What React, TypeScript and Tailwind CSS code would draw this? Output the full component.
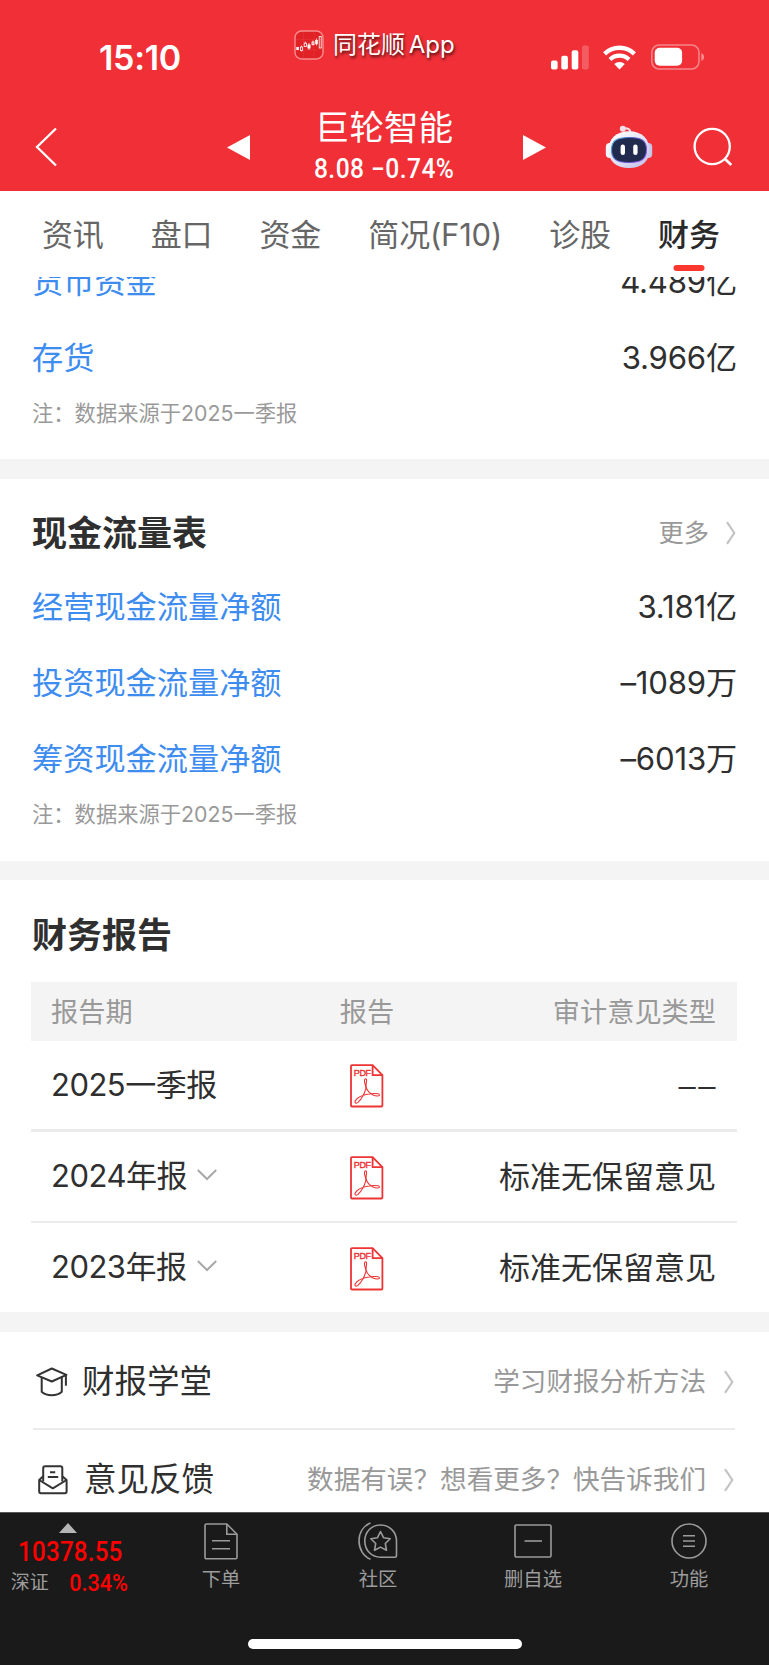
// App.tsx
import type { ReactNode } from "react";

interface RowItem {
  label: string;
  value: string;
}

interface ReportItem {
  period:     string;
  opinion:    string;
  expandable: boolean;
}

const TABS = ["资讯", "盘口", "资金", "简况(F10)", "诊股", "财务"];
const ACTIVE_TAB = "财务";

const BALANCE: RowItem[] = [
  { label: "货币资金", value: "4.489亿" },
  { label: "存货",     value: "3.966亿" },
];

const CASH_FLOW: RowItem[] = [
  { label: "经营现金流量净额", value: "3.181亿" },
  { label: "投资现金流量净额", value: "–1089万" },
  { label: "筹资现金流量净额", value: "–6013万" },
];

const REPORTS: ReportItem[] = [
  { period: "2025一季报", opinion: "",               expandable: false },
  { period: "2024年报",   opinion: "标准无保留意见", expandable: true },
  { period: "2023年报",   opinion: "标准无保留意见", expandable: true },
];

/* ---------- icons ---------- */

function AppBadge() {
  return (
    <svg width="30" height="30" viewBox="0 0 30 30" fill="none">
      <rect x="1" y="1" width="28" height="28" rx="6.5" fill="#e02226" stroke="#f78d8f" strokeWidth="1.4" />
      <path d="M9.5 2v26M20 2v26M2 9.5h26M2 20h26" stroke="#e8393c" strokeWidth=".5" />
      <rect x="2.3" y="17" width="2.6" height="3" fill="#fff" />
      <rect x="6.5" y="17" width="2" height="3.4" stroke="#fff" strokeWidth=".8" />
      <path d="M7.5 15.5V17M7.5 20.4v1.2M11.300 11.5v1.8M15 13v7M19 10.5v5M22.5 8.5v7" stroke="#fff" strokeWidth=".7" />
      <rect x="10.2" y="13.2" width="2.2" height="3.2" stroke="#fff" strokeWidth=".8" />
      <rect x="13.5" y="14.5" width="3" height="4" fill="#fff" />
      <rect x="18" y="12" width="2" height="2.6" stroke="#fff" strokeWidth=".8" />
      <rect x="21.2" y="10" width="2.6" height="4.2" fill="#fff" />
      <rect x="25.2" y="6.5" width="2" height="11.5" stroke="#fff" strokeWidth=".8" />
    </svg>
  );
}

function SignalIcon() {
  return (
    <svg width="38" height="25" viewBox="0 0 38 25" fill="#fff">
      <rect x="0" y="15.5" width="6.6" height="9" rx="2" />
      <rect x="10.3" y="10.7" width="6.6" height="13.8" rx="2" />
      <rect x="20.7" y="5.3" width="6.6" height="19.2" rx="2" />
      <rect x="31" y=".5" width="6.8" height="24" rx="2" opacity=".22" />
    </svg>
  );
}

function WifiIcon() {
  return (
    <svg width="33" height="25" viewBox="0 0 33 25" fill="none" stroke="#fff">
      <path d="M1.6 8.8a21.5 21.5 0 0 1 29.8 0" strokeWidth="4.4" />
      <path d="M7 14.4a13.7 13.7 0 0 1 19 0" strokeWidth="4.2" />
      <path d="M11.2 19.1a7.8 7.8 0 0 1 10.6 0L16.5 24.4Z" fill="#fff" stroke="none" />
    </svg>
  );
}

function BatteryIcon() {
  return (
    <svg width="54" height="26" viewBox="0 0 54 26" fill="none">
      <rect x=".8" y=".9" width="47.2" height="24.2" rx="7.5" stroke="#fff" strokeOpacity=".42" strokeWidth="1.5" />
      <rect x="3.7" y="3.8" width="27.4" height="18" rx="5" fill="#fff" />
      <path d="M50.3 9v8c1.7-.7 2.8-2.2 2.8-4s-1.1-3.3-2.8-4Z" fill="#fff" opacity=".45" />
    </svg>
  );
}

function RobotIcon() {
  return (
    <svg width="48" height="44" viewBox="0 0 48 44" fill="none">
      <defs>
        <linearGradient id="shell" x1="10" y1="6" x2="40" y2="44" gradientUnits="userSpaceOnUse">
          <stop stopColor="#ffffff" />
          <stop offset=".6" stopColor="#dcdcf3" />
          <stop offset="1" stopColor="#c3bfe6" />
        </linearGradient>
        <linearGradient id="rim" x1="6" y1="12" x2="42" y2="38" gradientUnits="userSpaceOnUse">
          <stop stopColor="#59c8e6" />
          <stop offset=".45" stopColor="#4c4fc4" />
          <stop offset="1" stopColor="#9a55ee" />
        </linearGradient>
      </defs>
      <path d="M18 3.5c4-.8 7.5.3 7.5 4.500" stroke="#f5dfe8" strokeWidth="2" />
      <circle cx="17.8" cy="3.7" r="3" fill="#f3dfea" />
      <rect x=".8" y="18" width="8" height="15" rx="4" fill="#f4f4fd" />
      <rect x="39.2" y="18" width="8" height="15" rx="4" fill="#c9c6ea" />
      <path d="M24 6.300c13 0 20.500 7.700 20.500 18.700S37 43 24 43 3.500 36 3.500 25 11 6.300 24 6.300Z" fill="url(#shell)" />
      <path d="M24 12.500c12.500 0 17.500 3 17.500 12.300S36.500 37.500 24 37.500 6.500 34 6.500 24.800 11.500 12.500 24 12.500Z" fill="#202b4e" stroke="url(#rim)" strokeWidth="1.1" />
      <rect x="15.6" y="19.5" width="4.4" height="10.5" rx="2.2" fill="#fff" />
      <rect x="28.2" y="19.5" width="4.4" height="10.5" rx="2.2" fill="#fff" />
    </svg>
  );
}

function SearchIcon() {
  return (
    <svg width="40" height="40" viewBox="0 0 40 40" fill="none" stroke="#fff" strokeWidth="2.3">
      <circle cx="19.2" cy="19.5" r="17.6" />
      <path d="M31.5 31.5l6.8 6.5" strokeWidth="2.6" />
    </svg>
  );
}

function ChevronRight() {
  return (
    <svg width="10" height="24" viewBox="0 0 10 24" fill="none" stroke="#c2c2c2" strokeWidth="2.1">
      <path d="M1 1.2 8.300 12 1 22.8" />
    </svg>
  );
}

function ChevronDown() {
  return (
    <svg className="-mt-[3px]" width="20" height="12" viewBox="0 0 20 12" fill="none" stroke="#a8a8a8" strokeWidth="2">
      <path d="M.8 1 10 10l9.2-9" />
    </svg>
  );
}

function PdfIcon() {
  return (
    <svg width="34" height="44" viewBox="0 0 34 44" fill="none" stroke="#ee3434">
      <path d="M2 1.2h20.6l9.8 10V41.5a1 1 0 0 1-1 1H2a1 1 0 0 1-1-1V2.2a1 1 0 0 1 1-1Z" strokeWidth="1.8" />
      <path d="M22.6 1.2V11.2h9.800" strokeWidth="1.8" />
      <text x="3.8" y="12" fontSize="9" fill="#ee3434" stroke="#ee3434" strokeWidth=".4" textLength="17.2" fontFamily="Liberation Sans, Arial, sans-serif">PDF</text>
      <path
        d="M15.600 14.800c-1.700.2-1.200 3.200-.5 5.300.5 2 1 3.200.7 4.600-1.100 4.500-4.600 10.700-7.800 13.700-1.600 1.300-3.700.6-2.800-1.300 1.500-3 6.800-5.700 11-6.600 4.500-1 9-1.300 12-.7 1.600.4 1.700 2.100-.2 2.200-3.500.2-6.700-1.500-9-3.800-1.700-1.600-2.700-3.800-2.900-6-.2-2.600.9-5.200.3-6.700-.2-.5-.5-.7-.8-.7Z"
        strokeWidth="1.1"
      />
    </svg>
  );
}

function SchoolIcon() {
  return (
    <svg width="32" height="30" viewBox="0 0 32 30" fill="none" stroke="#333" strokeWidth="2" strokeLinejoin="round">
      <path d="M1.2 8.3 15.8 1.5l14.6 6.3L15.8 14.5Z" />
      <path d="M5.700 10.500v14.200c2.400 2.200 6 3.500 10 3.500s7.700-1.300 10.100-3.500V10" />
      <path d="M29.9 8.2v10.500" />
    </svg>
  );
}

function FeedbackIcon() {
  return (
    <svg width="30" height="30" viewBox="0 0 30 30" fill="none" stroke="#333" strokeWidth="2" strokeLinejoin="round">
      <path d="M5.200 16.500V3.200c0-1.100.8-1.900 1.900-1.900h15.300c1.100 0 1.900.8 1.900 1.900v13.300" />
      <path d="M5.200 11.300 1.200 15v11.500c0 1 .8 1.800 1.800 1.800h23.800c1 0 1.800-.8 1.800-1.800V15l-4.300-3.700" />
      <path d="M1.2 15l13.600 8.300L28.600 15" />
      <path d="M12 7.3h5.2M9.8 12h10.4" />
    </svg>
  );
}

function OrderIcon() {
  return (
    <svg width="34" height="37" viewBox="0 0 34 37" fill="none" stroke="#9b9b9b" strokeWidth="1.6">
      <path d="M2.5 1h20.3L33 11.300V34.500a1.300 1.300 0 0 1-1.300 1.300H2.300A1.300 1.300 0 0 1 1 34.500V2.500A1.500 1.500 0 0 1 2.500 1Z" />
      <path d="M22.8 1v10.300H33" />
      <path d="M8 17.800h18M8 25.800h18" />
    </svg>
  );
}

function CommunityIcon() {
  return (
    <svg width="40" height="38" viewBox="0 0 40 38" fill="none" stroke="#9b9b9b" strokeWidth="1.6">
      <path d="M12.500 1C5.500 3.800 1 10.500 1 18.800s4.500 15.700 11.500 18.400" />
      <path d="M22.500 35.200c-9 0-15.700-7-15.700-16.200S13.500 3 22.500 3s16 7 16 16v14.700c0 1-.5 1.500-1.500 1.500Z" />
      <path d="m22.500 9.500 3 6.200 6.700 1-4.900 4.800 1.200 6.800-6-3.200-6 3.200 1.200-6.800-4.900-4.800 6.700-1Z" strokeLinejoin="round" />
    </svg>
  );
}

function RemoveIcon() {
  return (
    <svg width="38" height="34" viewBox="0 0 38 34" fill="none" stroke="#9b9b9b" strokeWidth="1.6">
      <rect x="1" y="1" width="36" height="32" rx="1.3" />
      <path d="M10.500 17h17.500" />
    </svg>
  );
}

function MenuIcon() {
  return (
    <svg width="36" height="36" viewBox="0 0 36 36" fill="none" stroke="#9b9b9b" strokeWidth="1.6">
      <circle cx="18" cy="18" r="17" />
      <path d="M12 12.700h12M12 18h12M12 23.300h12" />
    </svg>
  );
}

/* ---------- pieces ---------- */

function StatusBar() {
  return (
    <div className="flex h-[92px] items-start text-white">
      <div className="mt-[38px] ml-[99px] w-[195px] text-[34px] leading-10 font-semibold tracking-[-0.3px]">15:10</div>
      <div className="mt-[29px] flex w-[257px] items-center gap-[9px]">
        <AppBadge />
        <span className="text-[24px] leading-8 whitespace-nowrap [text-shadow:1px_2px_3px_rgba(0,0,0,0.7)]">
          同花顺 <span className="-ml-[3px]">App</span>
        </span>
      </div>
      <div className="mt-[44px] flex items-center">
        <SignalIcon />
        <div className="ml-[14px]"><WifiIcon /></div>
        <div className="ml-[15px]"><BatteryIcon /></div>
      </div>
    </div>
  );
}

function NavBar() {
  return (
    <div className="flex h-[99px] items-center pt-[11px] text-white">
      <svg className="ml-[35px]" width="22" height="40" viewBox="0 0 22 40" fill="none" stroke="#fff" strokeWidth="2.3">
        <path d="M21 1.5 2 20l19 18.5" />
      </svg>
      <svg className="ml-[170px]" width="23" height="25" viewBox="0 0 23 25" fill="#fff">
        <path d="M0 12.5 23 0v25Z" />
      </svg>
      <div className="mr-[5px] -mt-[11px] flex w-[268px] flex-col items-center">
        <div className="mt-[7px] text-[34.6px] leading-[46px]">巨轮智能</div>
        <div className="mt-px origin-center scale-x-[0.91] font-[Roboto] text-[27px] leading-[36px] font-medium tracking-[0.5px] whitespace-nowrap">
          8.08 −0.74%
        </div>
      </div>
      <svg width="23" height="25" viewBox="0 0 23 25" fill="#fff">
        <path d="M23 12.5 0 0v25Z" />
      </svg>
      <div className="-mt-px ml-[59px]"><RobotIcon /></div>
      <div className="ml-[40px]"><SearchIcon /></div>
    </div>
  );
}

function TabBar() {
  return (
    <div className="relative z-10 flex h-[86px] justify-between bg-white pr-[49px] pl-[42px] text-[31px] text-[#666]">
      {TABS.map((tab) => (
        <div key={tab} className="relative pt-[21px] leading-[46px]">
          {tab === ACTIVE_TAB ? (
            <>
              <span className="font-medium text-[#2a2a2a]">{tab}</span>
              <span className="absolute top-[74px] left-1/2 h-[6px] w-[31px] -translate-x-1/2 rounded-full bg-[#fb382f]" />
            </>
          ) : (
            <span className="tracking-[-0.2px]">{tab}</span>
          )}
        </div>
      ))}
    </div>
  );
}

function DataRow({ label, value }: RowItem) {
  return (
    <div className="flex h-[76px] items-center justify-between pt-[2px] text-[31.2px]">
      <span className="text-[#3d8cf0]">{label}</span>
      <span className="tracking-[-0.2px] text-[#2f2f2f]">{value}</span>
    </div>
  );
}

function SourceNote() {
  return <p className="text-[21.3px] leading-8 text-[#999]">注：数据来源于2025一季报</p>;
}

function LinkRow({ icon, label, hint }: { icon: ReactNode; label: string; hint: string }) {
  return (
    <div className="flex h-[98px] items-center pt-[2px] pr-[3px]">
      {icon}
      <span className="text-[32.5px] text-[#2f2f2f]">{label}</span>
      <span className="ml-auto text-[26.6px] text-[#999]">{hint}</span>
      <div className="ml-[18px]"><ChevronRight /></div>
    </div>
  );
}

function BottomItem({ icon, label }: { icon: ReactNode; label: string }) {
  return (
    <div className="flex w-[80px] flex-col items-center text-[19.3px] text-[#9d9d9d]">
      <div className="flex h-[38px] items-center">{icon}</div>
      <span className="mt-[5px] leading-7">{label}</span>
    </div>
  );
}

export default function App() {
  return (
    <div className="flex h-[1665px] w-[769px] flex-col overflow-hidden bg-white font-['Inter','Noto_Sans_CJK_SC',sans-serif]">
      <header className="bg-[#f12f37]">
        <StatusBar />
        <NavBar />
      </header>

      <TabBar />

      <main className="h-[1235px] shrink-0 overflow-hidden">
        {/* Balance sheet, scrolled under the tabs */}
        <section className="-mt-[34px] h-[216px] px-8">
          {BALANCE.map((row) => <DataRow key={row.label} {...row} />)}
          <div className="pt-[2px]"><SourceNote /></div>
        </section>

        <div className="h-5 bg-[#f4f4f4]" />

        {/* Cash flow */}
        <section className="h-[382px] px-8 pt-[28px]">
          <div className="flex h-[52px] items-center justify-between">
            <h2 className="text-[35px] font-bold text-[#2f2f2f]">现金流量表</h2>
            <div className="flex items-center gap-[17px] pr-px text-[25.3px] text-[#999]">
              更多
              <ChevronRight />
            </div>
          </div>
          <div className="pt-[9px]">
            {CASH_FLOW.map((row) => <DataRow key={row.label} {...row} />)}
          </div>
          <div className="pt-[2px]"><SourceNote /></div>
        </section>

        <div className="h-[19px] bg-[#f4f4f4]" />

        {/* Reports */}
        <section className="h-[432px] pt-[29px] pr-8 pl-[31px]">
          <h2 className="h-[73px] pt-px pl-px text-[35px] leading-[50px] font-bold text-[#2f2f2f]">财务报告</h2>
          <div className="grid h-[59px] grid-cols-[256px_120px_1fr] items-center bg-[#f4f4f4] pt-[3px] pr-[21px] pl-5 text-[27.2px] text-[#999]">
            <span>报告期</span>
            <span className="text-center">报告</span>
            <span className="text-right">审计意见类型</span>
          </div>
          {REPORTS.map((r, i) => (
            <div
              key={r.period}
              className={`grid grid-cols-[256px_120px_1fr] items-center pr-[21px] pl-5 text-[31px] text-[#2f2f2f] ${
                i === 0 ? "h-[91px] border-b-[3px] border-[#ebebeb]" : i === 1 ? "h-[91px] border-b-2 border-[#ebebeb]" : "h-[89px]"
              }`}
            >
              <span className="flex items-center gap-[10px] tracking-[-0.5px]">
                {r.period}
                {r.expandable && <ChevronDown />}
              </span>
              <span className="flex justify-center pt-[2px]"><PdfIcon /></span>
              {r.opinion ? (
                <span className="pt-px text-right whitespace-nowrap">{r.opinion}</span>
              ) : (
                <span className="-mr-[2px] pt-[3px] text-right font-['Liberation_Sans'] tracking-[2.5px]">––</span>
              )}
            </div>
          ))}
        </section>

        <div className="h-5 bg-[#f4f4f4]" />

        {/* Help links */}
        <section className="pr-8 pl-[31px]">
          <LinkRow icon={<div className="w-[51px] pl-[5px]"><SchoolIcon /></div>} label="财报学堂" hint="学习财报分析方法" />
          <div className="-mt-[2px] mr-[2px] ml-[2px] h-[2px] bg-[#ebebeb]" />
          <LinkRow icon={<div className="w-[53px] pl-[7px]"><FeedbackIcon /></div>} label="意见反馈" hint="数据有误？想看更多？快告诉我们" />
        </section>
      </main>

      <footer className="flex h-[153px] flex-col border-t border-[#565a58] bg-[#1a1a1a]">
        <div className="flex h-[126px] pt-[9px]">
          <div className="flex w-[140px] flex-col items-center">
            <svg className="mt-px -ml-[4px]" width="18" height="10" viewBox="0 0 18 10" fill="#b5b5b5">
              <path d="M9 0l9 10H0Z" />
            </svg>
            <span className="mt-[3px] scale-x-[0.88] font-[Roboto] text-[27.5px] leading-8 font-medium tracking-[0.2px] text-[#ff0000]">10378.55</span>
            <div className="flex items-center pt-px pl-[2px] leading-7 whitespace-nowrap">
              <span className="text-[19px] text-[#9d9d9d]">深证</span>
              <span className="-mt-px ml-[17px] origin-center scale-x-[0.9] font-[Roboto] text-[24px] font-medium text-[#ff0000]">0.34%</span>
            </div>
          </div>
          <div className="ml-[41px]"><BottomItem icon={<OrderIcon />} label="下单" /></div>
          <div className="ml-[77px]"><BottomItem icon={<CommunityIcon />} label="社区" /></div>
          <div className="ml-[75px]"><BottomItem icon={<RemoveIcon />} label="删自选" /></div>
          <div className="ml-[76px]"><BottomItem icon={<MenuIcon />} label="功能" /></div>
        </div>
        <div className="mx-auto h-[10px] w-[274px] rounded-full bg-white" />
      </footer>
    </div>
  );
}
